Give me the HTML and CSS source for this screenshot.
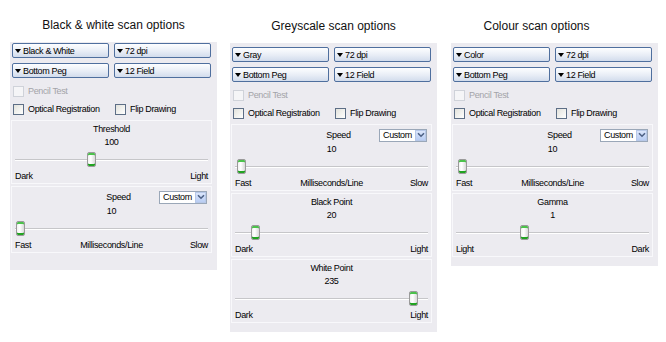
FILE: index.html
```html
<!DOCTYPE html>
<html lang="en">
<head>
    <meta charset="UTF-8">
    <title>Scan options</title>
    <link rel="stylesheet" href="styles.css">
</head>
<body>
    <div class="page">
        <!-- Black & white -->
        <section class="col">
            <h2 class="title">Black &amp; white scan options</h2>
            <div class="panel panel-bw">
                <div class="drops">
                    <button type="button" class="drop">Black &amp; White</button>
                    <button type="button" class="drop">72 dpi</button>
                    <button type="button" class="drop">Bottom Peg</button>
                    <button type="button" class="drop">12 Field</button>
                </div>
                <div class="checks">
                    <label class="check is-off"><span class="box"></span>Pencil Test</label>
                    <span></span>
                    <label class="check"><span class="box"></span>Optical Registration</label>
                    <label class="check"><span class="box"></span>Flip Drawing</label>
                </div>
                <div class="group">
                    <div class="group-head">Threshold</div>
                    <div class="group-value">100</div>
                    <div class="slider"><span class="track"></span><span class="thumb" style="--pos: 0.393"></span></div>
                    <div class="ends"><span>Dark</span><span></span><span>Light</span></div>
                </div>
                <div class="group">
                    <div class="group-head has-select">
                        <span></span>
                        <span class="speed-label">Speed</span>
                        <span class="combo"><span class="combo-text">Custom</span><span class="combo-btn"><svg viewBox="0 0 8 6" width="8" height="6"><path d="M1 1.2 4 4.2 7 1.2" fill="none" stroke="#4d6185" stroke-width="1.6"/></svg></span></span>
                    </div>
                    <div class="group-value">10</div>
                    <div class="slider"><span class="track"></span><span class="thumb" style="--pos: 0.005"></span></div>
                    <div class="ends"><span>Fast</span><span>Milliseconds/Line</span><span>Slow</span></div>
                </div>
            </div>
        </section>

        <!-- Greyscale -->
        <section class="col col-low">
            <h2 class="title">Greyscale scan options</h2>
            <div class="panel">
                <div class="drops">
                    <button type="button" class="drop">Gray</button>
                    <button type="button" class="drop">72 dpi</button>
                    <button type="button" class="drop">Bottom Peg</button>
                    <button type="button" class="drop">12 Field</button>
                </div>
                <div class="checks">
                    <label class="check is-off"><span class="box"></span>Pencil Test</label>
                    <span></span>
                    <label class="check"><span class="box"></span>Optical Registration</label>
                    <label class="check"><span class="box"></span>Flip Drawing</label>
                </div>
                <div class="group">
                    <div class="group-head has-select">
                        <span></span>
                        <span class="speed-label">Speed</span>
                        <span class="combo"><span class="combo-text">Custom</span><span class="combo-btn"><svg viewBox="0 0 8 6" width="8" height="6"><path d="M1 1.2 4 4.2 7 1.2" fill="none" stroke="#4d6185" stroke-width="1.6"/></svg></span></span>
                    </div>
                    <div class="group-value">10</div>
                    <div class="slider"><span class="track"></span><span class="thumb" style="--pos: 0.01"></span></div>
                    <div class="ends"><span>Fast</span><span>Milliseconds/Line</span><span>Slow</span></div>
                </div>
                <div class="group">
                    <div class="group-head">Black Point</div>
                    <div class="group-value">20</div>
                    <div class="slider"><span class="track"></span><span class="thumb" style="--pos: 0.087"></span></div>
                    <div class="ends"><span>Dark</span><span></span><span>Light</span></div>
                </div>
                <div class="group">
                    <div class="group-head">White Point</div>
                    <div class="group-value">235</div>
                    <div class="slider"><span class="track"></span><span class="thumb" style="--pos: 0.945"></span></div>
                    <div class="ends"><span>Dark</span><span></span><span>Light</span></div>
                </div>
            </div>
        </section>

        <!-- Colour -->
        <section class="col col-low col-colour">
            <h2 class="title">Colour scan options</h2>
            <div class="panel">
                <div class="drops">
                    <button type="button" class="drop">Color</button>
                    <button type="button" class="drop">72 dpi</button>
                    <button type="button" class="drop">Bottom Peg</button>
                    <button type="button" class="drop">12 Field</button>
                </div>
                <div class="checks">
                    <label class="check is-off"><span class="box"></span>Pencil Test</label>
                    <span></span>
                    <label class="check"><span class="box"></span>Optical Registration</label>
                    <label class="check"><span class="box"></span>Flip Drawing</label>
                </div>
                <div class="group">
                    <div class="group-head has-select">
                        <span></span>
                        <span class="speed-label">Speed</span>
                        <span class="combo"><span class="combo-text">Custom</span><span class="combo-btn"><svg viewBox="0 0 8 6" width="8" height="6"><path d="M1 1.2 4 4.2 7 1.2" fill="none" stroke="#4d6185" stroke-width="1.6"/></svg></span></span>
                    </div>
                    <div class="group-value">10</div>
                    <div class="slider"><span class="track"></span><span class="thumb" style="--pos: 0.01"></span></div>
                    <div class="ends"><span>Fast</span><span>Milliseconds/Line</span><span>Slow</span></div>
                </div>
                <div class="group">
                    <div class="group-head">Gamma</div>
                    <div class="group-value">1</div>
                    <div class="slider"><span class="track"></span><span class="thumb" style="--pos: 0.35"></span></div>
                    <div class="ends"><span>Light</span><span></span><span>Dark</span></div>
                </div>
            </div>
        </section>
    </div>
</body>
</html>
```

FILE: styles.css
```css
:root {
    --panel-bg: #ecebf0;
    --group-line: #f8f8fb;
    --btn-border: #4f6f9e;
    --check-border: #5d6e86;
    --muted: #a3a3a8;
}
body {
    margin: 0;
    background: #fff;
    color: #000;
    font-family: "Liberation Sans", Arial, sans-serif;
    font-size: 9px;
    letter-spacing: -0.35px;
}
.page {
    display: flex;
    gap: 13px;
    padding: 18px 0 0 10px;
}
.col { width: 207px; }
.col-low { margin-top: 1px; }
.col-colour { margin-left: 1px; }

.title {
    margin: 0 0 10px;
    font: normal 12px/14px "Liberation Sans", Arial, sans-serif;
    letter-spacing: 0;
    color: #111;
    text-align: center;
}
.col-colour .title { padding-right: 36px; }

.panel {
    background: var(--panel-bg);
    padding: 4px 5px 9px 1px;
}
.panel-bw { padding-top: 1px; padding-bottom: 17px; }

/* dropdown buttons */
.drops {
    display: grid;
    grid-template-columns: 97px 97px;
    grid-auto-rows: 15px;
    gap: 5px;
    padding-left: 1px;
}
.drop {
    display: flex;
    align-items: center;
    margin: 0;
    padding: 0 0 0 2px;
    border: 1px solid var(--btn-border);
    border-radius: 2px;
    background: linear-gradient(#fdfeff, #e8edf6 55%, #d2dcec);
    font: inherit;
    letter-spacing: inherit;
    color: #000;
    text-align: left;
    white-space: nowrap;
}
.drop::before {
    content: "";
    flex: none;
    margin-right: 2px;
    border-left: 3.5px solid transparent;
    border-right: 3.5px solid transparent;
    border-top: 4px solid #000;
}

/* checkboxes */
.checks {
    display: grid;
    grid-template-columns: 97px 97px;
    grid-auto-rows: 18px;
    column-gap: 5px;
    margin-top: 4px;
    padding-left: 1px;
}
.check {
    display: flex;
    align-items: center;
    gap: 4px;
    padding-left: 1px;
    white-space: nowrap;
}
.box {
    flex: none;
    width: 9px;
    height: 9px;
    border: 1px solid var(--check-border);
    background: linear-gradient(135deg, #e2e2dc, #fff);
}
.check.is-off { color: var(--muted); }
.check.is-off .box { border-color: #cfd2d9; background: #f5f5f7; }

/* slider groups */
.group {
    margin-top: 2px;
    padding: 2px 3px 0;
    border: 1px solid var(--group-line);
}
.group-head {
    height: 13px;
    line-height: 13px;
    text-align: center;
}
.group-head.has-select {
    display: grid;
    grid-template-columns: 1fr auto 1fr;
    align-items: center;
    height: 16px;
}
.speed-label { padding-left: 14px; }
.combo {
    justify-self: end;
    display: flex;
    width: 46px;
    height: 11px;
    margin-right: 1px;
    border: 1px solid #9aa7b8;
    background: #fff;
    line-height: 11px;
}
.combo-text { flex: 1; padding-left: 3px; text-align: left; }
.combo-btn {
    flex: none;
    display: flex;
    align-items: center;
    justify-content: center;
    width: 9px;
    border: 1px solid #b7c8e8;
    background: linear-gradient(#dbe6fb, #b9cdf3);
}
.group-value {
    line-height: 13px;
    text-align: center;
}
.slider {
    position: relative;
    height: 21px;
    display: flex;
    align-items: center;
}
.track {
    flex: 1;
    height: 1px;
    background: #c6c6c9;
    border-bottom: 1px solid #fff;
}
.thumb {
    position: absolute;
    top: 3px;
    left: calc((100% - 9px) * var(--pos));
    width: 7px;
    height: 13px;
    border: 1px solid #9a9a9a;
    border-radius: 2px;
    background: linear-gradient(90deg, #f2f2f2, #fff 40%, #d9d9d9);
    box-shadow: inset 0 2px 0 #4cc24c, inset 0 -2px 0 #21a321;
}
.ends {
    display: grid;
    grid-template-columns: 1fr auto 1fr;
    line-height: 13px;
}
.ends span:last-child { text-align: right; }
```
